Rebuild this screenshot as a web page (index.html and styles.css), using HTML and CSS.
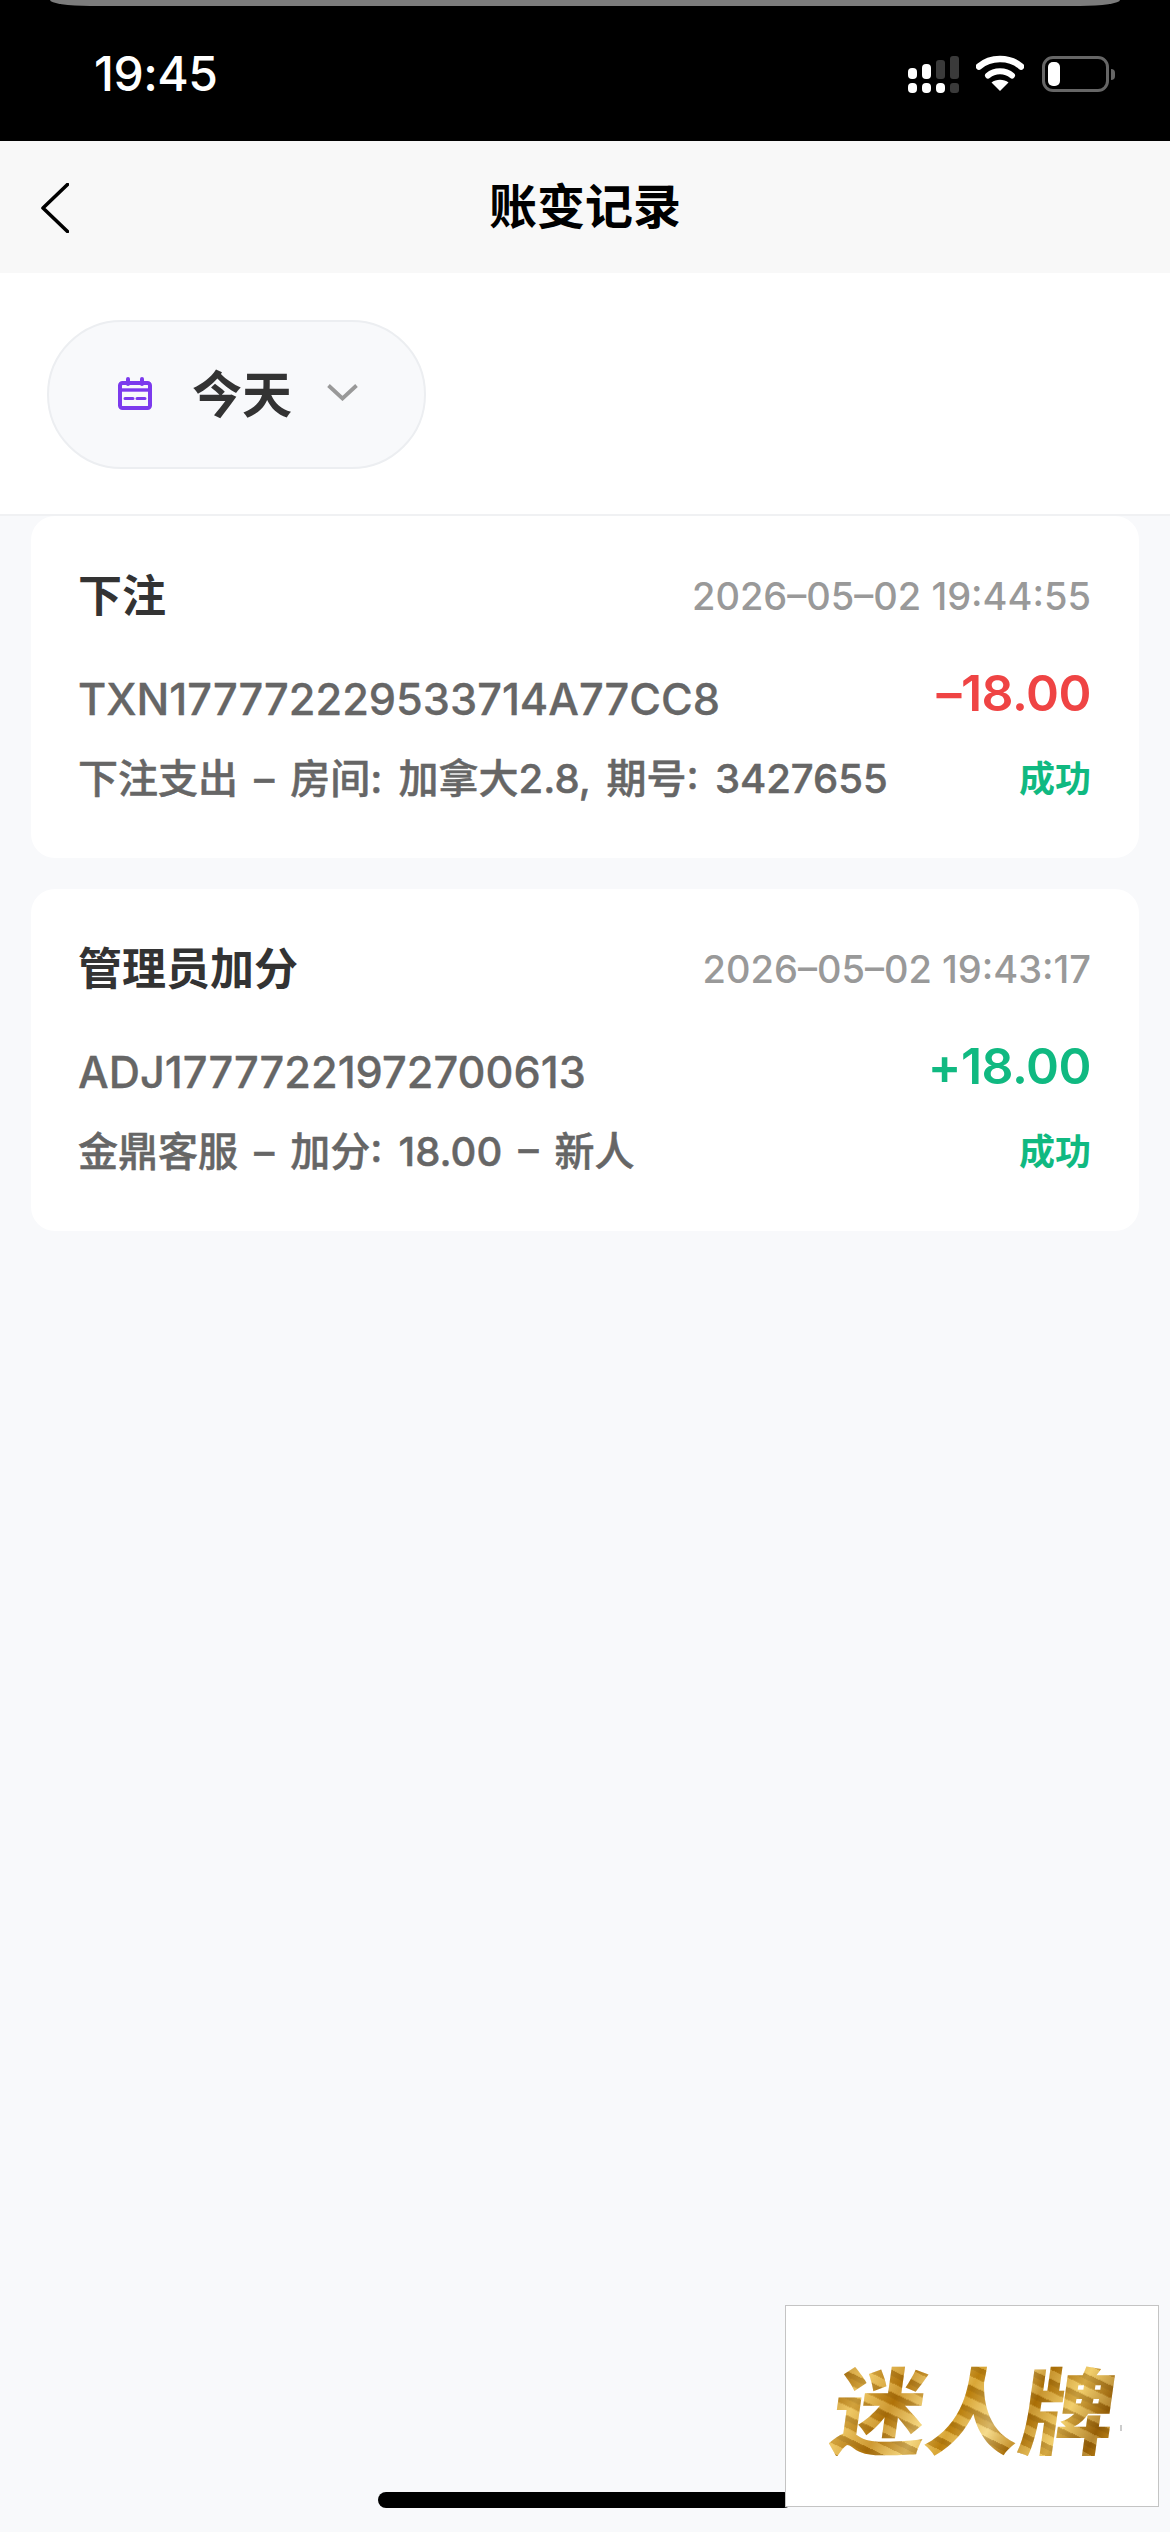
FILE: index.html
```html
<!DOCTYPE html>
<html lang="zh-CN">
<head>
<meta charset="utf-8">
<title>账变记录</title>
<link rel="stylesheet" href="styles.css">
</head>
<body>
<div class="phone">
  <header class="status">
    <div class="island"></div>
    <div class="status-row">
      <span class="clock">19:45</span>
      <div class="status-icons">
        <svg class="signal" width="52" height="38" viewBox="0 0 52 38">
          <rect x="0" y="12" width="9" height="11" rx="4" fill="#fff"/>
          <rect x="14" y="8" width="9" height="15" rx="4" fill="#fff"/>
          <rect x="28" y="4" width="9" height="19" rx="3" fill="#3a3a3a"/>
          <rect x="42" y="0" width="9" height="23" rx="3" fill="#3a3a3a"/>
          <rect x="0" y="27" width="9" height="10" rx="4" fill="#fff"/>
          <rect x="14" y="27" width="9" height="10" rx="4" fill="#fff"/>
          <rect x="28" y="27" width="9" height="10" rx="4" fill="#fff"/>
          <rect x="42" y="27" width="9" height="10" rx="3" fill="#3a3a3a"/>
        </svg>
        <svg class="wifi" width="48" height="36" viewBox="0 0 48 36">
          <path d="M3 11.500C14.500 1.500 33.500 1.500 45 11.500" fill="none" stroke="#fff" stroke-width="6.500" stroke-linecap="round"/>
          <path d="M12 20.500C18.500 14.800 29.500 14.800 36 20.500" fill="none" stroke="#fff" stroke-width="6" stroke-linecap="round"/>
          <path d="M24 36L15.500 27.500C20 23.800 28 23.800 32.500 27.500Z" fill="#fff"/>
        </svg>
        <div class="battery">
          <div class="battery-body"><div class="battery-level"></div></div>
          <div class="battery-nub"></div>
        </div>
      </div>
    </div>
  </header>

  <nav class="navbar">
    <svg class="back" width="28" height="50" viewBox="0 0 28 50">
      <path d="M26.500 1.500L2 25L26.500 48.500" fill="none" stroke="#000" stroke-width="3.600" stroke-linecap="round" stroke-linejoin="round"/>
    </svg>
    <h1 class="nav-title">账变记录</h1>
  </nav>

  <section class="filter">
    <div class="pill">
      <svg class="cal" width="34" height="33" viewBox="0 0 34 33">
        <rect x="2" y="6" width="30" height="25" rx="2.500" fill="none" stroke="#7c3aed" stroke-width="4"/>
        <path d="M2 13H32" stroke="#7c3aed" stroke-width="3.400"/>
        <path d="M10 2V7M24 2V7" stroke="#7c3aed" stroke-width="4" stroke-linecap="round"/>
        <path d="M7 21.500H15M19 21.500H27" stroke="#7c3aed" stroke-width="3" stroke-linecap="round"/>
      </svg>
      <span class="pill-text">今天</span>
      <svg class="chev" width="31" height="17" viewBox="0 0 31 17">
        <path d="M1.500 1.500L15.500 14.500L29.500 1.500" fill="none" stroke="#999" stroke-width="3.800"/>
      </svg>
    </div>
  </section>

  <main class="list">
    <article class="card">
      <div class="row row-head">
        <span class="card-title">下注</span>
        <span class="card-time">2026–05–02 19:44:55</span>
      </div>
      <div class="row row-main">
        <span class="card-id">TXN177772229533714A77CC8</span>
        <span class="amount minus">–18.00</span>
      </div>
      <div class="row row-sub">
        <span class="card-desc">下注支出 – 房间: 加拿大2.8, 期号: 3427655</span>
        <span class="state">成功</span>
      </div>
    </article>
    <article class="card">
      <div class="row row-head">
        <span class="card-title">管理员加分</span>
        <span class="card-time">2026–05–02 19:43:17</span>
      </div>
      <div class="row row-main">
        <span class="card-id">ADJ17777221972700613</span>
        <span class="amount plus">+18.00</span>
      </div>
      <div class="row row-sub">
        <span class="card-desc">金鼎客服 – 加分: 18.00 – 新人</span>
        <span class="state">成功</span>
      </div>
    </article>
  </main>

  <div class="home-bar"></div>
  <div class="watermark"><span class="watermark-text">迷人牌</span></div>
</div>
</body>
</html>
```
FILE: styles.css
```css
* { box-sizing: border-box; }
html, body { margin: 0; padding: 0; }
body {
  font-family: Inter, "Noto Sans CJK SC", sans-serif;
  background: #f8f9fb;
}
.phone {
  position: relative;
  width: 1170px;
  height: 2532px;
  overflow: hidden;
  background: #f8f9fb;
}

/* status bar */
.status {
  height: 141px;
  background: #000;
  color: #fff;
}
.island {
  height: 6px;
  margin: 0 50px;
  background: #7c7c7c;
  border-radius: 0 0 40px 40px / 0 0 6px 6px;
}
.status-row {
  display: flex;
  justify-content: space-between;
  align-items: flex-start;
  padding: 40px 55px 0 94px;
}
.clock {
  font-size: 48px;
  font-weight: 500;
  line-height: 56px;
  letter-spacing: -0.5px;
}
.status-icons {
  display: flex;
  align-items: flex-start;
  padding-top: 10px;
}
.signal { margin-right: 16px; }
.wifi { margin-right: 18px; margin-top: -1px; }
.battery { display: flex; align-items: center; gap: 2px; }
.battery-body {
  width: 67px;
  height: 36px;
  border: 3px solid #666;
  border-radius: 11px;
  padding: 3px;
}
.battery-level {
  width: 12px;
  height: 24px;
  background: #fff;
  border-radius: 5px;
}
.battery-nub {
  width: 4px;
  height: 11px;
  background: #666;
  border-radius: 0 4px 4px 0;
}

/* navbar */
.navbar {
  position: relative;
  display: flex;
  align-items: center;
  justify-content: center;
  height: 132px;
  background: #f8f8f8;
}
.back { position: absolute; left: 41px; top: 42px; }
.nav-title {
  margin: 0;
  font-size: 48px;
  font-weight: 700;
  line-height: 64px;
  color: #000;
}

/* filter */
.filter {
  height: 243px;
  padding-top: 47px;
  background: #fff;
  border-bottom: 2px solid #f0f1f3;
}
.pill {
  display: flex;
  align-items: center;
  width: 379px;
  height: 149px;
  margin-left: 47px;
  padding-left: 69px;
  background: #f8f9fb;
  border: 2px solid #eceef1;
  border-radius: 75px;
}
.cal { margin-right: 40px; margin-top: -2px; }
.pill-text {
  font-size: 50px;
  font-weight: 700;
  line-height: 64px;
  color: #333;
}
.chev { margin-left: 35px; margin-top: -4px; }

/* list */
.list {
  display: flex;
  flex-direction: column;
  gap: 31px;
  padding: 0 31px;
}
.card {
  height: 342px;
  padding: 46px 48px 0 47px;
  background: #fff;
  border-radius: 24px;
}
.row {
  display: flex;
  justify-content: space-between;
}
.row-head { height: 68px; align-items: center; }
.row-main { height: 64px; margin-top: 31px; align-items: center; }
.row-sub { height: 56px; margin-top: 23px; align-items: center; }
.card-title {
  font-size: 44px;
  font-weight: 700;
  line-height: 60px;
  color: #333;
}
.card-time {
  font-size: 38px;
  font-weight: 500;
  color: #999;
}
.card-id {
  padding-top: 11px;
  font-size: 43.300px;
  font-weight: 500;
  -webkit-text-stroke: 0.3px #666;
  color: #666;
}
.amount {
  font-size: 50px;
  font-weight: 600;
  letter-spacing: -0.5px;
}
.minus { color: #ef4444; }
.plus { color: #10b981; }
.card-desc {
  font-size: 40px;
  font-weight: 500;
  word-spacing: 5.500px;
  -webkit-text-stroke: 0.5px #666;
  color: #666;
}
.state {
  font-size: 36px;
  font-weight: 700;
  color: #10b981;
}

/* overlays */
.home-bar {
  position: absolute;
  left: 378px;
  top: 2492px;
  width: 414px;
  height: 16px;
  background: #000;
  border-radius: 8px;
}
.watermark {
  position: absolute;
  left: 785px;
  top: 2305px;
  display: flex;
  align-items: center;
  justify-content: center;
  width: 374px;
  height: 202px;
  padding-left: 6px;
  background: #fff;
  border: 1px solid #c4c4c4;
}
.watermark::after {
  content: "";
  position: absolute;
  left: 334px;
  top: 119px;
  width: 2px;
  height: 6px;
  background: #ccc;
}
.watermark-text {
  font-size: 94px;
  font-weight: 900;
  line-height: 100px;
  font-family: "Noto Sans CJK SC", sans-serif;
  transform: skewX(-8deg);
  background:
    repeating-linear-gradient(24deg, rgba(122,74,0,0.35) 0 5px, rgba(255,226,140,0.3) 5px 13px, rgba(150,92,0,0.28) 13px 19px),
    linear-gradient(112deg, #a86c08 0%, #e8bd55 12%, #b97a0c 24%, #f0d27c 36%, #c98d12 46%, #f2d98e 58%, #b07408 68%, #ecc65e 80%, #96600a 92%, #d9a32c 100%);
  -webkit-background-clip: text;
  background-clip: text;
  color: transparent;
}
```
